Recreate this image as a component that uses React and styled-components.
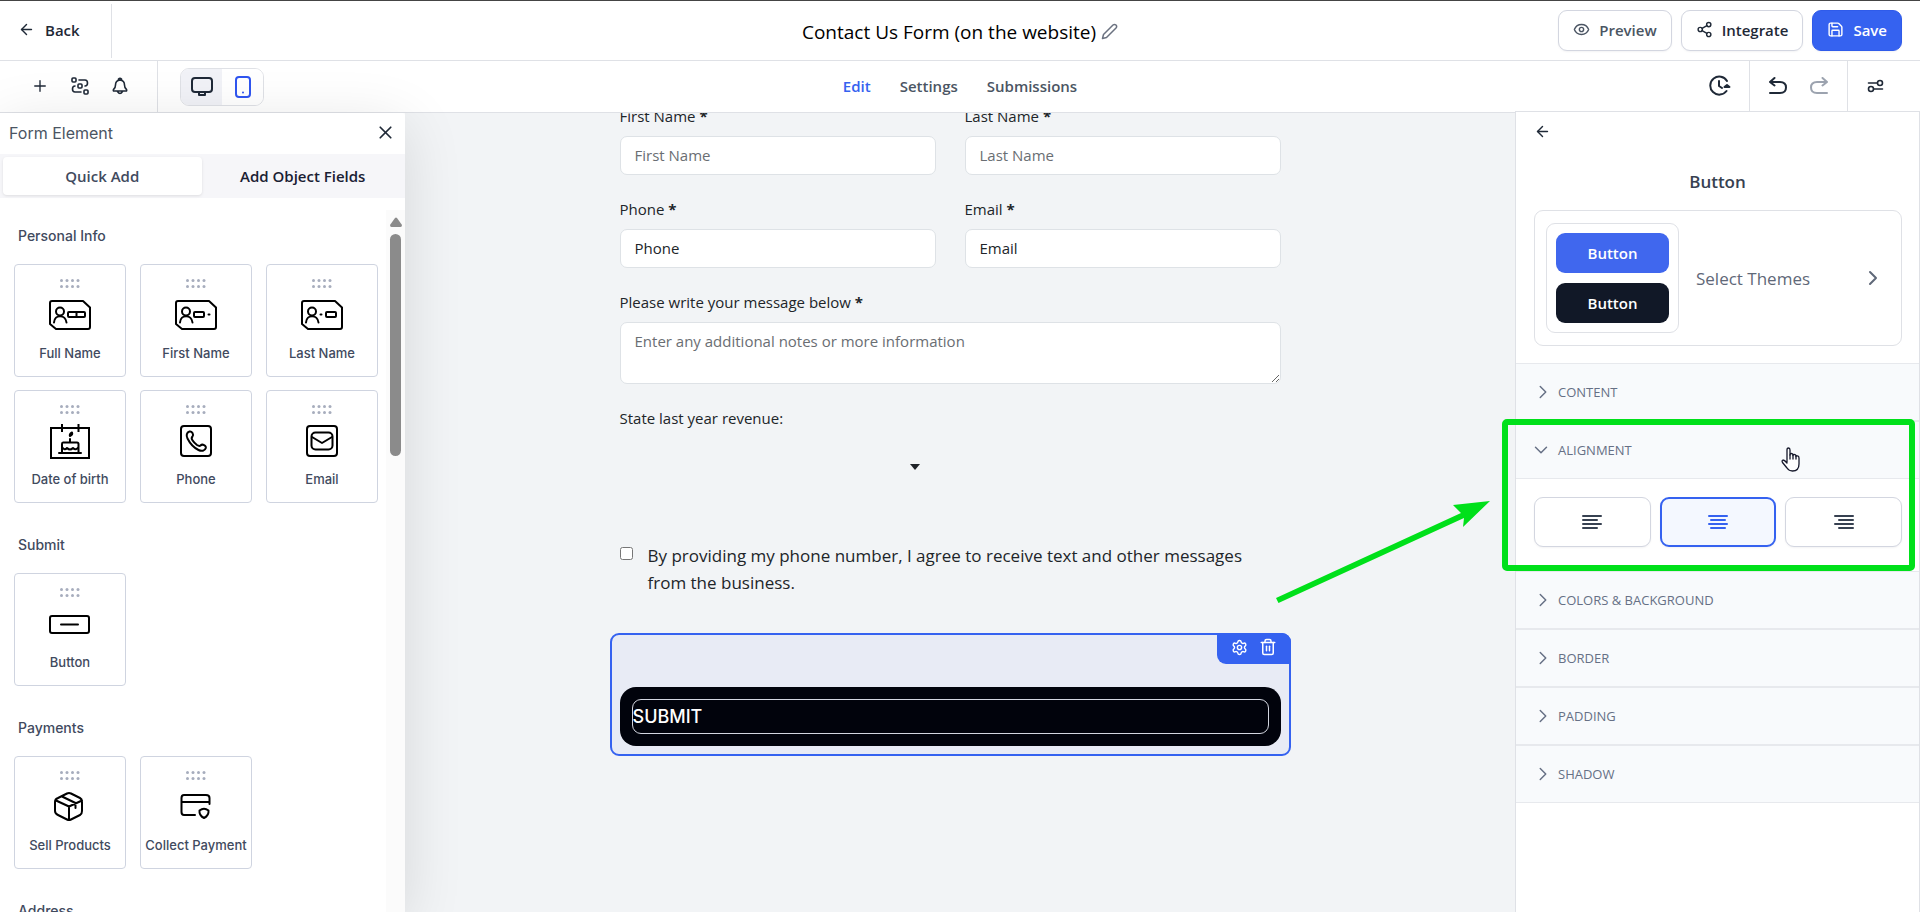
import React from 'react';
import styled, { createGlobalStyle, css } from 'styled-components';
import { ArrowLeft, ChevronDown, ChevronRight, Eye, Plus, Save, Settings, Share2, Trash2, X } from 'lucide-react';

const personalInfo = [
  { label: 'Full Name', icon: 'fullName' },
  { label: 'First Name', icon: 'firstName' },
  { label: 'Last Name', icon: 'lastName' },
  { label: 'Date of birth', icon: 'birth' },
  { label: 'Phone', icon: 'phone' },
  { label: 'Email', icon: 'email' },
];

const elementGroups = [
  { title: 'Personal Info', items: personalInfo },
  { title: 'Submit', items: [{ label: 'Button', icon: 'button' }] },
  {
    title: 'Payments',
    items: [
      { label: 'Sell Products', icon: 'box' },
      { label: 'Collect Payment', icon: 'card' },
    ],
  },
  { title: 'Address', items: [] },
];

const lineWidths = [18, 14, 18, 14];

/* ---------- icons ---------- */

const Stroke = ({ w, h, sw = 2, children }) => (
  <svg width={w} height={h} viewBox={`0 0 ${w} ${h}`} fill="none" stroke="currentColor"
    strokeWidth={sw} strokeLinecap="round" strokeLinejoin="round" aria-hidden="true">
    {children}
  </svg>
);

const IdCard = ({ children }) => (
  <Stroke w={42} h={32}>
    <path d="M3 2H34L41 8.500V28Q41 30 39 30H7L1 25V4Q1 2 3 2Z" />
    <circle cx="11" cy="12.500" r="4" />
    <path d="M5 23.500C5.500 15 16.500 15 17.500 23.500" />
    {children}
  </Stroke>
);

const elementIcons = {
  fullName: (
    <IdCard>
      <rect x="19" y="13" width="17" height="5" rx="1" />
      <path d="M27.500 13V18" />
    </IdCard>
  ),
  firstName: (
    <IdCard>
      <rect x="19" y="13" width="10" height="5" rx="1" />
      <path d="M33.500 15.500H34.500" />
    </IdCard>
  ),
  lastName: (
    <IdCard>
      <path d="M19.500 15.500H20.500" />
      <rect x="25" y="13" width="10" height="5" rx="1" />
    </IdCard>
  ),
  birth: (
    <Stroke w={40} h={38}>
      <path d="M1 6H39V36H1ZM12 2V10M28.500 2V10" strokeLinejoin="miter" strokeLinecap="butt" />
      <path d="M9 31H31M12 31V22Q12 20.500 13 20.500H27Q28.500 20.500 28.500 22V31M12 25Q14.500 29 17 26Q20 29 23 26Q26 29 28.500 25M20 20V17M20 14Q19 12 22 10.500Q23 13 20 14" />
    </Stroke>
  ),
  phone: (
    <Stroke w={32} h={32}>
      <rect x="1" y="1" width="30" height="30" rx="3" />
      <path d="M9.500 6.500C6.500 7.500 6 10.500 7.500 13.500C10 18.500 13.500 22.500 18.500 25C21.500 26.500 25 26 25.800 23C26.300 20.500 22.500 18.500 20.500 20.500C19.500 21.500 18.500 21 17 20C15 18.500 13.500 17 12.300 15C11.300 13.500 11.500 12.500 12.500 11.500C14 9.500 12 6 9.500 6.500Z" />
    </Stroke>
  ),
  email: (
    <Stroke w={32} h={32}>
      <rect x="1" y="1" width="30" height="30" rx="3" />
      <rect x="5.500" y="7.500" width="21" height="17" rx="4" />
      <path d="M6 12L16 18L26 12" />
    </Stroke>
  ),
  button: (
    <Stroke w={42} h={20}>
      <rect x="1" y="2" width="39" height="17" rx="2" />
      <path d="M12 10.500H29" />
    </Stroke>
  ),
  box: (
    <Stroke w={32} h={32}>
      <path d="M13 2.500Q15 1.500 17 2.500L26 7Q28 8 28 11V20Q28 23 26 24L17 28.500Q15 29.500 13 28.500L4 24Q1 22.500 1 20V11Q1 8 4 7ZM2 9.500L15 15.500L28 9.500M15 15.500V29M8 5.500L21.500 12V17" />
    </Stroke>
  ),
  card: (
    <Stroke w={32} h={28}>
      <path d="M15 22H4Q1.500 22 1.500 19V5Q1.500 2 4 2H26Q29.500 2 29.500 5V11M1.500 9H29.500M19.500 17.500Q24 14 28.500 17.500Q29 22.500 24 25Q19 22.500 19.500 17.500Z" />
    </Stroke>
  ),
};

const DragDots = () => (
  <svg width="20" height="9" viewBox="0 0 20 9" fill="#a7adbd" aria-hidden="true">
    {[1.5, 7, 12.5, 18].map((x) => (
      <React.Fragment key={x}>
        <circle cx={x} cy="1.500" r="1.500" />
        <circle cx={x} cy="7.500" r="1.500" />
      </React.Fragment>
    ))}
  </svg>
);

const AlignIcon = ({ side }) => (
  <Stroke w={20} h={16}>
    {lineWidths.map((width, i) => {
      const free = 18 - width;
      const x = 1 + (side === 'left' ? 0 : side === 'right' ? free : free / 2);
      return <path key={i} d={`M${x} ${2 + i * 4}H${x + width}`} />;
    })}
  </Stroke>
);

const ArrowTurn = () => (
  <Stroke w={20} h={20}>
    <path d="M6.500 2L2 6L6.500 9.500M2 6H12Q18 6 18 11.500Q18 17 12 17H2" />
  </Stroke>
);

/* ---------- page ---------- */

export default function App() {
  return (
    <>
      <GlobalStyle />
      <Page>
        <Header>
          <BackButton><ArrowLeft size={17} /> Back</BackButton>
          <Title>
            <h1>Contact Us Form (on the website)</h1>
            <IconButton aria-label="Rename form" $muted>
              <Stroke w={17} h={17} sw={1.5}>
                <path d="M1.500 15.500L2.500 11.500L12 2Q13.500 .8 15 2Q16.300 3.500 15 5L5.500 14.500Z" />
              </Stroke>
            </IconButton>
          </Title>
          <Actions>
            <ActionButton $muted><Eye size={17} />Preview</ActionButton>
            <ActionButton><Share2 size={17} />Integrate</ActionButton>
            <ActionButton $primary><Save size={17} />Save</ActionButton>
          </Actions>
        </Header>

        <Toolbar>
          <ToolGroup>
            <LeftTools>
              <IconButton aria-label="Add element"><Plus size={18} strokeWidth={1.800} /></IconButton>
              <IconButton aria-label="Workflow">
                <Stroke w={18} h={18} sw={1.6}>
                  <rect x="1" y="1" width="4" height="4" rx="1" />
                  <rect x="7" y="7" width="4" height="4" rx="1" />
                  <rect x="13" y="13" width="4" height="4" rx="1" />
                  <path d="M8 3H14Q16.500 3 16.500 6Q16.500 9 14 9M4 9Q1.500 9 1.500 12Q1.500 15 4 15H10" />
                </Stroke>
              </IconButton>
              <IconButton aria-label="Notifications">
                <Stroke w={18} h={18} sw={1.6}>
                  <path d="M9 3Q4.500 3.500 4.500 8Q4.500 11 2.500 12.500Q2 14 3 14H15Q16 14 15.500 12.500Q13.500 11 13.500 8Q13.500 3.500 9 3ZM7.500 3V2Q9 .5 10.500 2V3M6.500 14.500Q9 18.500 11.500 14.500" />
                </Stroke>
              </IconButton>
            </LeftTools>
            <DeviceToggle>
              <DeviceButton aria-label="Desktop view" $shaded>
                <Stroke w={22} h={22}>
                  <rect x="1" y="2" width="20" height="14" rx="3" />
                  <path d="M8 17V19H14V17" />
                </Stroke>
              </DeviceButton>
              <DeviceButton aria-label="Mobile view" $active>
                <Stroke w={16} h={22}>
                  <rect x="1" y="1" width="14" height="20" rx="3" />
                  <path d="M8 16.500V16.600" />
                </Stroke>
              </DeviceButton>
            </DeviceToggle>
          </ToolGroup>
          <Nav>
            <NavLink href="#edit" $active>Edit</NavLink>
            <NavLink href="#settings">Settings</NavLink>
            <NavLink href="#submissions">Submissions</NavLink>
          </Nav>
          <RightTools>
            <ToolCell>
              <IconButton aria-label="History">
                <Stroke w={22} h={22}>
                  <path d="M18 6A9 9 0 1 0 17.500 16M10 6V11L13 13" />
                  <path d="M15.500 12L18 10L20.500 12Z" fill="currentColor" />
                </Stroke>
              </IconButton>
            </ToolCell>
            <ToolCell>
              <IconButton aria-label="Undo"><ArrowTurn /></IconButton>
              <IconButton aria-label="Redo" $faded $flip><ArrowTurn /></IconButton>
            </ToolCell>
            <ToolCell>
              <IconButton aria-label="Options">
                <Stroke w={17} h={14} sw={1.6}>
                  <path d="M1.500 4H10M7 10H15.500" />
                  <circle cx="13" cy="4" r="2.500" />
                  <circle cx="4" cy="10" r="2.500" />
                </Stroke>
              </IconButton>
            </ToolCell>
          </RightTools>
        </Toolbar>

        <Workspace>
          <ElementPanel>
            <PanelHeader>
              Form Element
              <IconButton aria-label="Close"><X size={21} /></IconButton>
            </PanelHeader>
            <Tabs>
              <Tab $active>Quick Add</Tab>
              <Tab>Add Object Fields</Tab>
            </Tabs>
            <ElementScroll>
              <ElementList>
                {elementGroups.map(({ title, items }) => (
                  <section key={title}>
                    <GroupTitle>{title}</GroupTitle>
                    <Cards>
                      {items.map(({ label, icon }) => (
                        <Card key={label}>
                          <DragDots />
                          <CardIcon>{elementIcons[icon]}</CardIcon>
                          {label}
                        </Card>
                      ))}
                    </Cards>
                  </section>
                ))}
              </ElementList>
              <ScrollTrack>
                <svg width="12" height="10" viewBox="0 0 12 10" fill="#8b8b8b" aria-hidden="true">
                  <path d="M5 1Q6 0 7 1L12 8Q12 10 10.500 10H1.500Q0 10 0 8Z" />
                </svg>
                <ScrollThumb />
              </ScrollTrack>
            </ElementScroll>
          </ElementPanel>

          <Canvas>
            <Form onSubmit={(e) => e.preventDefault()}>
              <Field>
                <label htmlFor="first">First Name <b>*</b></label>
                <Input id="first" placeholder="First Name" />
              </Field>
              <Field>
                <label htmlFor="last">Last Name <b>*</b></label>
                <Input id="last" placeholder="Last Name" />
              </Field>
              <Field>
                <label htmlFor="phone">Phone <b>*</b></label>
                <Input id="phone" defaultValue="Phone" />
              </Field>
              <Field>
                <label htmlFor="email">Email <b>*</b></label>
                <Input id="email" defaultValue="Email" />
              </Field>
              <Field $wide>
                <label htmlFor="message">Please write your message below <b>*</b></label>
                <TextArea id="message" placeholder="Enter any additional notes or more information" />
              </Field>
              <Field $wide>
                <label htmlFor="revenue">State last year revenue:</label>
                <SelectRow>
                  <Select id="revenue" />
                  <svg width="10" height="6" viewBox="0 0 10 6" fill="#1f2328" aria-hidden="true">
                    <path d="M0 0H10L5 6Z" />
                  </svg>
                </SelectRow>
              </Field>
              <Consent htmlFor="consent">
                <input id="consent" type="checkbox" />
                <span>By providing my phone number, I agree to receive text and other messages from the business.</span>
              </Consent>
              <SelectedBlock>
                <BlockTools>
                  <IconButton type="button" aria-label="Block settings"><Settings size={17} /></IconButton>
                  <IconButton type="button" aria-label="Delete block"><Trash2 size={18} /></IconButton>
                </BlockTools>
                <SubmitButton type="submit"><span>SUBMIT</span></SubmitButton>
              </SelectedBlock>
            </Form>
          </Canvas>

          <PropertyPanel>
            <PropertyBack aria-label="Back to elements"><ArrowLeft size={17} /></PropertyBack>
            <h2>Button</h2>
            <ThemeCard>
              <ThemePreview>
                <ThemeSwatch>Button</ThemeSwatch>
                <ThemeSwatch $dark>Button</ThemeSwatch>
              </ThemePreview>
              Select Themes
              <ChevronRight size={24} />
            </ThemeCard>
            <Accordion>CONTENT</Accordion>
            <OpenSection>
              <AccordionHeader $open aria-expanded="true">
                <ChevronDown size={22} strokeWidth={1.600} />ALIGNMENT
                <HandCursor />
              </AccordionHeader>
              <AlignOptions>
                <AlignButton aria-label="Align left"><AlignIcon side="left" /></AlignButton>
                <AlignButton aria-label="Align center" $active><AlignIcon side="center" /></AlignButton>
                <AlignButton aria-label="Align right"><AlignIcon side="right" /></AlignButton>
              </AlignOptions>
              <Highlight />
              <Pointer />
            </OpenSection>
            <Accordion>COLORS &amp; BACKGROUND</Accordion>
            <Accordion>BORDER</Accordion>
            <Accordion>PADDING</Accordion>
            <Accordion>SHADOW</Accordion>
          </PropertyPanel>
        </Workspace>
      </Page>
    </>
  );
}

const Accordion = ({ children }) => (
  <AccordionHeader aria-expanded="false">
    <ChevronRight size={22} strokeWidth={1.600} />{children}
  </AccordionHeader>
);

const Pointer = () => (
  <PointerSvg width="216" height="104" viewBox="0 0 216 104" fill="#00e01a" aria-hidden="true">
    <path d="M0 97L185 12L177 4L214 0L187 26L188 17L2.500 102Z" />
  </PointerSvg>
);

const HandCursor = () => (
  <CursorSvg width="20" height="26" viewBox="0 0 20 26" fill="#fff" stroke="#15182b" strokeWidth="1.300"
    strokeLinejoin="round" strokeLinecap="round" aria-hidden="true">
    <path d="M6 15V3Q6 1 7.500 1Q9 1 9 3V8Q9 6.500 10.500 6.500Q12 6.500 12 8.500Q12 7.300 13.500 7.500Q15 7.500 15 9.500Q15 8.500 16.500 8.800Q18 9 18 11V17Q18 24 11.500 24Q8 24 6 21L1.500 15.500Q.5 13.500 2 13Q3.500 13 6 16" />
    <path d="M9 8V12M12 8.500V12M15 9.500V12" fill="none" />
  </CursorSvg>
);

/* ---------- styles ---------- */

const GlobalStyle = createGlobalStyle`
  * { box-sizing: border-box; }
  body {
    margin: 0;
    font-family: "Open Sans", "Noto Sans", sans-serif;
    font-size: 15px;
    color: #212529;
    background: #fff;
  }
  button, input, select, textarea { font: inherit; color: inherit; }
  button { cursor: pointer; margin: 0; }
  h1, h2, h3 { margin: 0; }
`;

const row = css`
  display: flex;
  align-items: center;
`;

const Page = styled.div`
  display: flex;
  flex-direction: column;
  height: 100vh;
  overflow: hidden;
  border-top: 1px solid #444;
`;

const Header = styled.header`
  display: grid;
  grid-template-columns: 1fr auto 1fr;
  align-items: center;
  height: 60px;
  flex: none;
  border-bottom: 1px solid #dfe1e6;
`;

const BackButton = styled.button`
  ${row}
  justify-self: start;
  gap: 10px;
  height: 54px;
  padding: 0 31px 2px 18px;
  background: none;
  border: 0;
  border-right: 1px solid #dfe1e6;
  font-weight: 600;
  color: #1f2937;
`;

const Title = styled.div`
  ${row}
  gap: 5px;
  padding-top: 2px;
  h1 {
    font-size: 19px;
    font-weight: 400;
    color: #000;
  }
`;

const IconButton = styled.button`
  display: flex;
  padding: 0;
  border: 0;
  background: none;
  color: ${({ $muted, $faded }) => ($muted ? '#6b7280' : $faded ? '#9ca3af' : '#1f2937')};
  transform: ${({ $flip }) => ($flip ? 'scaleX(-1)' : 'none')};
`;

const Actions = styled.div`
  ${row}
  justify-content: flex-end;
  gap: 9px;
  padding-right: 18px;
`;

const ActionButton = styled.button`
  ${row}
  gap: 9px;
  height: 41px;
  padding: 0 14px 2px;
  border: 1px solid ${({ $primary }) => ($primary ? '#2f5bea' : '#d3d6e0')};
  border-radius: 9px;
  background: ${({ $primary }) => ($primary ? '#3562f0' : '#fff')};
  color: ${({ $primary, $muted }) => ($primary ? '#fff' : $muted ? '#4b5563' : '#1f2937')};
  box-shadow: 0 1px 2px rgba(16, 24, 40, 0.05);
  font-weight: 600;
`;

const Toolbar = styled.div`
  display: grid;
  grid-template-columns: 1fr auto 1fr;
  height: 52px;
  flex: none;
  border-bottom: 1px solid #dfe1e6;
`;

const ToolGroup = styled.div`
  ${row}
  gap: 22px;
`;

const LeftTools = styled.div`
  ${row}
  gap: 22px;
  height: 51px;
  padding: 0 28px 2px 31px;
  border-right: 1px solid #dfe1e6;
`;

const DeviceToggle = styled.div`
  display: flex;
  height: 38px;
  border: 1px solid #dfe1e6;
  border-radius: 9px;
  overflow: hidden;
`;

const DeviceButton = styled.button`
  ${row}
  justify-content: center;
  width: 41px;
  padding: 0;
  border: 0;
  background: ${({ $shaded }) => ($shaded ? '#f1f2f7' : '#fff')};
  color: ${({ $active }) => ($active ? '#2f55f0' : '#1f2937')};
`;

const Nav = styled.nav`
  ${row}
  gap: 29px;
  padding-bottom: 2px;
`;

const NavLink = styled.a`
  font-weight: 600;
  text-decoration: none;
  color: ${({ $active }) => ($active ? '#3562f0' : '#4b5563')};
`;

const RightTools = styled.div`
  display: flex;
  justify-content: flex-end;
`;

const ToolCell = styled.div`
  ${row}
  gap: 21px;
  padding: 0 18px 2px;
  border-right: 1px solid #dfe1e6;
  &:last-child {
    border: 0;
    padding: 0 36px 2px 19px;
  }
`;

const Workspace = styled.main`
  display: flex;
  flex: 1;
  min-height: 0;
`;

const ElementPanel = styled.aside`
  position: relative;
  z-index: 1;
  display: flex;
  flex-direction: column;
  width: 405px;
  flex: none;
  background: #fff;
  border-radius: 0 3px 0 0;
  box-shadow: 0 12px 60px rgba(0, 0, 0, 0.12);
  font-family: Inter, sans-serif;
`;

const PanelHeader = styled.div`
  ${row}
  justify-content: space-between;
  height: 41px;
  padding: 0 9px 2px;
  font-size: 16px;
  color: #4b5563;
`;

const Tabs = styled.div`
  display: flex;
  gap: 2px;
  padding: 3px;
  height: 44px;
  background: #f6f6f9;
`;

const Tab = styled.button`
  flex: 1;
  border: 0;
  border-radius: 4px;
  font-family: "Open Sans", sans-serif;
  font-weight: 600;
  background: ${({ $active }) => ($active ? '#fff' : 'none')};
  color: ${({ $active }) => ($active ? '#414a5e' : '#1a2033')};
  box-shadow: ${({ $active }) => ($active ? '0 1px 3px rgba(0, 0, 0, 0.1)' : 'none')};
`;

const ElementScroll = styled.div`
  display: flex;
  flex: 1;
  min-height: 0;
  padding-top: 12px;
`;

const ElementList = styled.div`
  flex: 1;
  overflow: hidden;
  padding: 16px 0 0 14px;
`;

const GroupTitle = styled.h3`
  padding: 0 4px;
  margin-bottom: 18px;
  font-size: 14px;
  font-weight: 500;
  line-height: 20px;
  color: #414a5e;
`;

const Cards = styled.div`
  display: grid;
  grid-template-columns: repeat(3, 112px);
  gap: 13px 14px;
  margin-bottom: 32px;
`;

const Card = styled.button`
  display: flex;
  flex-direction: column;
  align-items: center;
  justify-content: flex-start;
  height: 113px;
  padding: 14px 0 0;
  border: 1px solid #cfd4e0;
  border-radius: 4px;
  background: #fff;
  font-size: 13px;
  font-weight: 500;
  line-height: 20px;
  white-space: nowrap;
  color: #414a5e;
`;

const CardIcon = styled.span`
  ${row}
  height: 44px;
  margin: 5px 0 6px;
  color: #000;
`;

const ScrollTrack = styled.div`
  display: flex;
  flex-direction: column;
  align-items: center;
  gap: 7px;
  width: 19px;
  padding-top: 7px;
  background: #fbfbfb;
`;

const ScrollThumb = styled.div`
  width: 11px;
  height: 222px;
  border-radius: 6px;
  background: #8b8b8b;
`;

const Canvas = styled.div`
  flex: 1;
  min-width: 0;
  overflow: hidden;
  padding: 0 20px 0 0;
  background: #f2f4f6;
`;

const Form = styled.form`
  display: grid;
  grid-template-columns: 1fr 1fr;
  gap: 22px 29px;
  max-width: 661px;
  margin: -9px auto 0;
`;

const Field = styled.div`
  display: flex;
  flex-direction: column;
  gap: 8px;
  grid-column: ${({ $wide }) => ($wide ? '1 / -1' : 'auto')};
  line-height: 24px;
`;

const inputBox = css`
  width: 100%;
  border: 1px solid #dee2e6;
  border-radius: 7px;
  background: #fff;
  &::placeholder {
    color: #6a6e73;
    opacity: 1;
  }
`;

const Input = styled.input`
  ${inputBox}
  height: 39px;
  padding: 0 14px 2px;
`;

const TextArea = styled.textarea`
  ${inputBox}
  display: block;
  height: 62px;
  padding: 6px 14px;
`;

const SelectRow = styled.div`
  ${row}
  height: 58px;
`;

const Select = styled.select`
  appearance: none;
  width: 290px;
  height: 39px;
  border: 0;
  background: none;
`;

const Consent = styled.label`
  display: flex;
  align-items: flex-start;
  grid-column: 1 / -1;
  gap: 15px;
  margin: 24px 0 15px;
  font-size: 17px;
  line-height: 27px;
  input {
    flex: none;
    margin: 5px 0 0;
  }
`;

const SelectedBlock = styled.div`
  position: relative;
  grid-column: 1 / -1;
  margin: 0 -10px;
  padding: 52px 8px 8px;
  border: 2px solid #3562f0;
  border-radius: 9px;
  background: #e8ebf5;
`;

const BlockTools = styled.div`
  ${row}
  position: absolute;
  top: -2px;
  right: -2px;
  gap: 11px;
  height: 31px;
  padding: 0 14px 3px;
  border-radius: 0 9px 0 9px;
  background: #3562f0;
  ${IconButton} {
    color: #fff;
  }
`;

const SubmitButton = styled.button`
  display: block;
  width: 100%;
  padding: 12px;
  border: 0;
  border-radius: 16px;
  background: #01030c;
  span {
    display: block;
    border: 1px solid #d3d6e0;
    border-radius: 9px;
    text-align: left;
    font: 500 18px/33px Inter, sans-serif;
    color: #fff;
  }
`;

const PropertyPanel = styled.aside`
  position: relative;
  width: 405px;
  flex: none;
  margin-top: -2px;
  background: #fff;
  border: 1px solid #dfe1e6;
  border-bottom: 0;
  h2 {
    margin: 18px 0 14px;
    font-size: 17px;
    font-weight: 600;
    line-height: 28px;
    text-align: center;
    color: #374151;
  }
`;

const PropertyBack = styled.button`
  ${row}
  height: 38px;
  padding: 0 18px;
  border: 0;
  background: none;
  color: #1f2937;
`;

const ThemeCard = styled.div`
  ${row}
  gap: 17px;
  margin: 0 17px 17px 18px;
  padding: 12px 16px 12px 11px;
  border: 1px solid #dfe1e6;
  border-radius: 9px;
  font-size: 17px;
  font-weight: 500;
  color: #5f6878;
  > svg {
    margin-left: auto;
  }
`;

const ThemePreview = styled.div`
  display: flex;
  flex-direction: column;
  gap: 10px;
  width: 133px;
  padding: 9px;
  border: 1px solid #dfe1e6;
  border-radius: 9px;
`;

const ThemeSwatch = styled.button`
  height: 40px;
  padding: 0;
  border: 0;
  border-radius: 9px;
  background: ${({ $dark }) => ($dark ? '#111827' : '#4067ee')};
  color: #fff;
  font-size: 15px;
  font-weight: 600;
`;

const AccordionHeader = styled.button`
  ${row}
  position: relative;
  gap: ${({ $open }) => ($open ? '6px' : '4px')};
  width: 100%;
  height: 58px;
  padding: 0 ${({ $open }) => ($open ? '14px' : '16px')};
  border: solid #e7e9ed;
  border-width: 1px 0;
  background: #f8fafc;
  font-size: 13px;
  font-weight: 500;
  text-align: left;
  color: #667085;
`;

const OpenSection = styled.section`
  position: relative;
`;

const AlignOptions = styled.div`
  display: grid;
  grid-template-columns: repeat(3, 1fr);
  gap: 9px;
  padding: 18px 17px 24px 18px;
`;

const AlignButton = styled.button`
  ${row}
  justify-content: center;
  height: 50px;
  border: ${({ $active }) => ($active ? '2px solid #3562f0' : '1px solid #d3d6e0')};
  border-radius: 9px;
  background: ${({ $active }) => ($active ? '#f4f8ff' : '#fff')};
  color: ${({ $active }) => ($active ? '#3562f0' : '#374151')};
  box-shadow: 0 1px 2px rgba(16, 24, 40, 0.05);
`;

const Highlight = styled.div`
  position: absolute;
  inset: -2px 4px 0 -14px;
  border: 6px solid #00e01a;
  border-radius: 5px;
  pointer-events: none;
`;

const PointerSvg = styled.svg`
  position: absolute;
  top: 80px;
  left: -240px;
  pointer-events: none;
`;

const CursorSvg = styled.svg`
  position: absolute;
  top: 25px;
  right: 118px;
`;
